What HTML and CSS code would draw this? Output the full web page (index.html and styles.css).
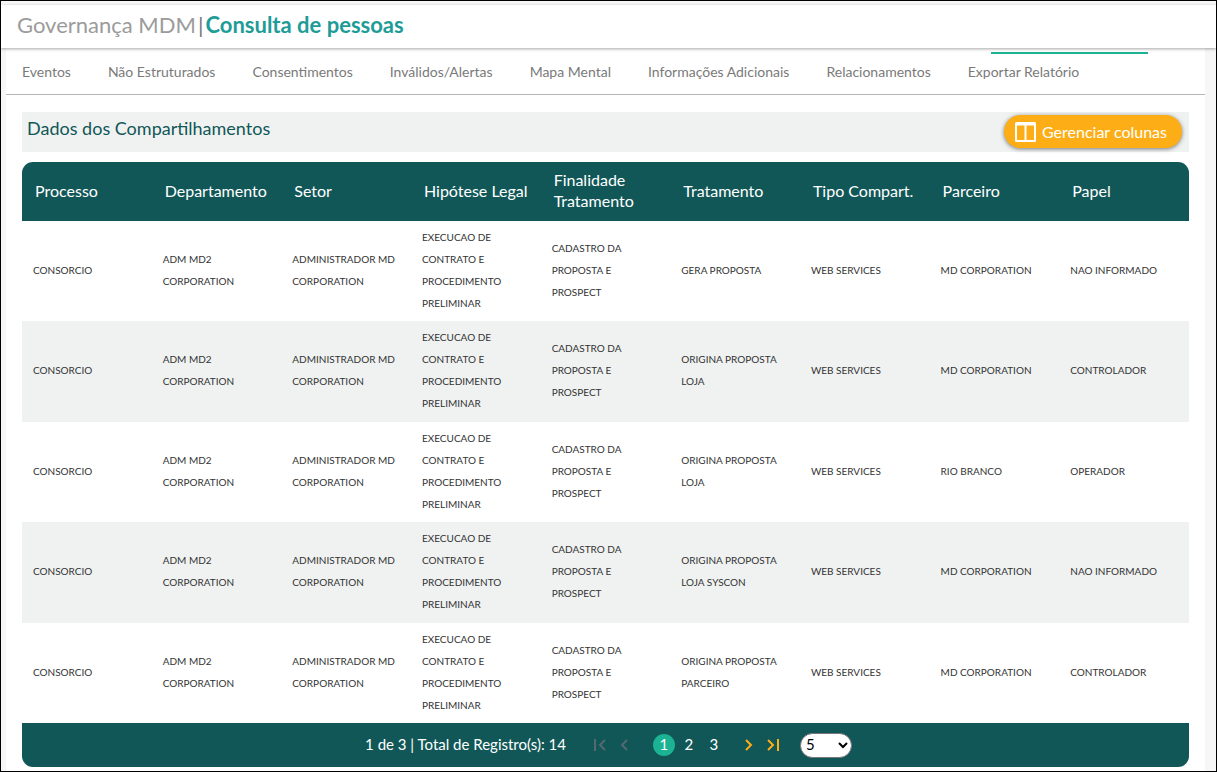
FILE: index.html
```
<!DOCTYPE html>
<html lang="pt-BR">
<head>
<meta charset="utf-8">
<meta name="viewport" content="width=device-width, initial-scale=1">
<title>Governança MDM | Consulta de pessoas</title>
<link rel="stylesheet" href="styles.css">
</head>
<body class="page">
<header class="topbar">
  <h1 class="title"><span class="title-app">Governança MDM</span><span class="title-sep">|</span><span class="title-page">Consulta de pessoas</span></h1>
</header>
<main class="content">
  <nav class="tabs" aria-label="Seções">
    <a class="tab" href="#eventos">Eventos</a>
    <a class="tab" href="#nao-estruturados">Não Estruturados</a>
    <a class="tab" href="#consentimentos">Consentimentos</a>
    <a class="tab" href="#invalidos">Inválidos/Alertas</a>
    <a class="tab" href="#mapa">Mapa Mental</a>
    <a class="tab" href="#informacoes">Informações Adicionais</a>
    <a class="tab" href="#relacionamentos">Relacionamentos</a>
    <a class="tab" href="#exportar">Exportar Relatório</a>
  </nav>
  <section class="panel">
    <div class="panel-head">
      <h2 class="panel-title">Dados dos Compartilhamentos</h2>
      <button class="columns-btn" type="button">
        <svg class="columns-icon" width="21" height="20" viewBox="0 0 21 20" aria-hidden="true"><path fill="#fff" fill-rule="evenodd" d="M1.500 0h18A1.500 1.500 0 0 1 21 1.500v17a1.500 1.500 0 0 1-1.500 1.500h-18A1.500 1.500 0 0 1 0 18.500v-17A1.500 1.500 0 0 1 1.500 0zM2 3.500v14.500h7.500V3.500zM11.500 3.500v14.500H19V3.500z"/></svg>
        Gerenciar colunas
      </button>
    </div>
    <table class="grid">
      <thead>
        <tr><th scope="col">Processo</th><th scope="col">Departamento</th><th scope="col">Setor</th><th scope="col">Hipótese Legal</th><th scope="col">Finalidade Tratamento</th><th scope="col">Tratamento</th><th scope="col">Tipo Compart.</th><th scope="col">Parceiro</th><th scope="col">Papel</th></tr>
      </thead>
      <tbody>
        <tr><td>CONSORCIO</td><td>ADM MD2 CORPORATION</td><td>ADMINISTRADOR MD CORPORATION</td><td>EXECUCAO DE CONTRATO E PROCEDIMENTO PRELIMINAR</td><td>CADASTRO DA PROPOSTA E PROSPECT</td><td>GERA PROPOSTA</td><td>WEB SERVICES</td><td>MD CORPORATION</td><td>NAO INFORMADO</td></tr>
        <tr><td>CONSORCIO</td><td>ADM MD2 CORPORATION</td><td>ADMINISTRADOR MD CORPORATION</td><td>EXECUCAO DE CONTRATO E PROCEDIMENTO PRELIMINAR</td><td>CADASTRO DA PROPOSTA E PROSPECT</td><td>ORIGINA PROPOSTA LOJA</td><td>WEB SERVICES</td><td>MD CORPORATION</td><td>CONTROLADOR</td></tr>
        <tr><td>CONSORCIO</td><td>ADM MD2 CORPORATION</td><td>ADMINISTRADOR MD CORPORATION</td><td>EXECUCAO DE CONTRATO E PROCEDIMENTO PRELIMINAR</td><td>CADASTRO DA PROPOSTA E PROSPECT</td><td>ORIGINA PROPOSTA LOJA</td><td>WEB SERVICES</td><td>RIO BRANCO</td><td>OPERADOR</td></tr>
        <tr><td>CONSORCIO</td><td>ADM MD2 CORPORATION</td><td>ADMINISTRADOR MD CORPORATION</td><td>EXECUCAO DE CONTRATO E PROCEDIMENTO PRELIMINAR</td><td>CADASTRO DA PROPOSTA E PROSPECT</td><td>ORIGINA PROPOSTA LOJA SYSCON</td><td>WEB SERVICES</td><td>MD CORPORATION</td><td>NAO INFORMADO</td></tr>
        <tr><td>CONSORCIO</td><td>ADM MD2 CORPORATION</td><td>ADMINISTRADOR MD CORPORATION</td><td>EXECUCAO DE CONTRATO E PROCEDIMENTO PRELIMINAR</td><td>CADASTRO DA PROPOSTA E PROSPECT</td><td>ORIGINA PROPOSTA PARCEIRO</td><td>WEB SERVICES</td><td>MD CORPORATION</td><td>CONTROLADOR</td></tr>
      </tbody>
    </table>
    <footer class="pager">
      <span class="pager-info">1 de 3 | Total de Registro(s): 14</span>
      <div class="pager-nav">
        <button class="step" type="button" aria-label="Primeira página" disabled><svg width="24" height="24" viewBox="0 0 24 24" aria-hidden="true"><path d="M7 6v12M17 7l-5 5 5 5"/></svg></button>
        <button class="step" type="button" aria-label="Página anterior" disabled><svg width="24" height="24" viewBox="0 0 24 24" aria-hidden="true"><path d="M15 7l-5 5 5 5"/></svg></button>
      </div>
      <div class="pager-pages">
        <button class="num num-on" type="button" aria-current="page">1</button>
        <button class="num" type="button">2</button>
        <button class="num" type="button">3</button>
      </div>
      <div class="pager-nav">
        <button class="step" type="button" aria-label="Próxima página"><svg width="24" height="24" viewBox="0 0 24 24" aria-hidden="true"><path d="M9 7l5 5-5 5"/></svg></button>
        <button class="step" type="button" aria-label="Última página"><svg width="24" height="24" viewBox="0 0 24 24" aria-hidden="true"><path d="M7 7l5 5-5 5M17 6v12"/></svg></button>
      </div>
      <select class="size" aria-label="Registros por página"><option>5</option><option>10</option><option>20</option></select>
    </footer>
  </section>
</main>
</body>
</html>
```
FILE: styles.css
```
* { box-sizing: border-box; }

.page {
  margin: 0;
  min-height: 100vh;
  display: flex;
  flex-direction: column;
  border: 1px solid #000;
  background: #f7f7f7;
  font-family: Lato, "Open Sans", sans-serif;
  color: #333;
}

.topbar {
  position: relative;
  z-index: 1;
  margin-top: 4px;
  padding: 5px 16px 9px;
  background: #fff;
  box-shadow: 0 1px 3px rgba(0, 0, 0, 0.35);
}

.title {
  display: flex;
  gap: 2px;
  margin: 0;
  font-size: 22px;
  line-height: 29px;
  font-weight: 400;
  color: #9b9b9b;
}

.title-sep { color: #777; }
.title-page { font-weight: 700; color: #1e9c97; }

.content {
  flex: 1;
  margin: 0 11px 0 5px;
  background: #fff;
}

.tabs {
  position: relative;
  display: flex;
  gap: 37px;
  padding: 14px 16px 12px;
  border-bottom: 1px solid #b5b5b5;
}

.tabs::after {
  content: "";
  position: absolute;
  top: 4px;
  right: 57px;
  width: 157px;
  height: 2px;
  background: #1bb394;
}

.tab {
  font-size: 14px;
  line-height: 20px;
  color: #7a7a7a;
  text-decoration: none;
  white-space: nowrap;
}

.panel { padding: 17px 16px 4px; }

.panel-head {
  display: flex;
  justify-content: space-between;
  align-items: flex-start;
  height: 40px;
  margin-bottom: 10px;
  padding: 3px 7px 0 5px;
  background: #f0f2f2;
}

.panel-title {
  margin: 0;
  font-size: 18px;
  line-height: 26px;
  font-weight: 400;
  color: #115757;
}

.columns-btn {
  display: flex;
  align-items: center;
  gap: 6px;
  height: 33px;
  padding: 0 15px 0 11px;
  border: 0;
  border-radius: 17px;
  background: #fdae17;
  box-shadow: 0 1px 4px rgba(0, 0, 0, 0.5);
  font: 400 16px/20px Lato, "Open Sans", sans-serif;
  color: #fff;
}

.grid {
  width: 100%;
  table-layout: fixed;
  border-collapse: separate;
  border-spacing: 0;
}

.grid th {
  padding: 7px 13px 10px;
  background: #115757;
  color: #fff;
  font-size: 16px;
  line-height: 21px;
  font-weight: 400;
  text-align: left;
}

.grid th:first-child { border-top-left-radius: 11px; }
.grid th:last-child { border-top-right-radius: 11px; }

.grid td {
  padding: 5px 11px 7px;
  font-size: 10px;
  line-height: 22px;
}

.grid tr:nth-child(even) td {
  padding-bottom: 8px;
  background: #f0f2f2;
}

.pager {
  display: flex;
  justify-content: center;
  align-items: center;
  height: 44px;
  padding-left: 6px;
  border-radius: 0 0 11px 11px;
  background: #115757;
  color: #fff;
  font-size: 15px;
}

.pager-info {
  margin-right: 22px;
  padding-bottom: 2px;
}

.pager-nav { display: flex; }

.step {
  display: block;
  width: 24px;
  height: 24px;
  padding: 0;
  border: 0;
  background: none;
  color: #fdae17;
}

.step:disabled { color: #536a73; }

.step svg {
  display: block;
  fill: none;
  stroke: currentColor;
  stroke-width: 2;
}

.pager-pages {
  display: flex;
  gap: 3px;
  margin: 0 12px 0 17px;
}

.num {
  width: 22px;
  height: 22px;
  padding: 0 0 2px;
  border: 0;
  border-radius: 50%;
  background: none;
  color: #fff;
  font: 400 15px/20px Lato, "Open Sans", sans-serif;
}

.num-on { background: #1bb394; }

.size {
  width: 52px;
  height: 25px;
  margin-left: 15px;
  padding: 0 0 2px 1px;
  border: 1px solid #767676;
  border-radius: 13px;
  background-color: #fff;
  color: #000;
  font: 400 15px/20px Lato, "Open Sans", sans-serif;
}
```
